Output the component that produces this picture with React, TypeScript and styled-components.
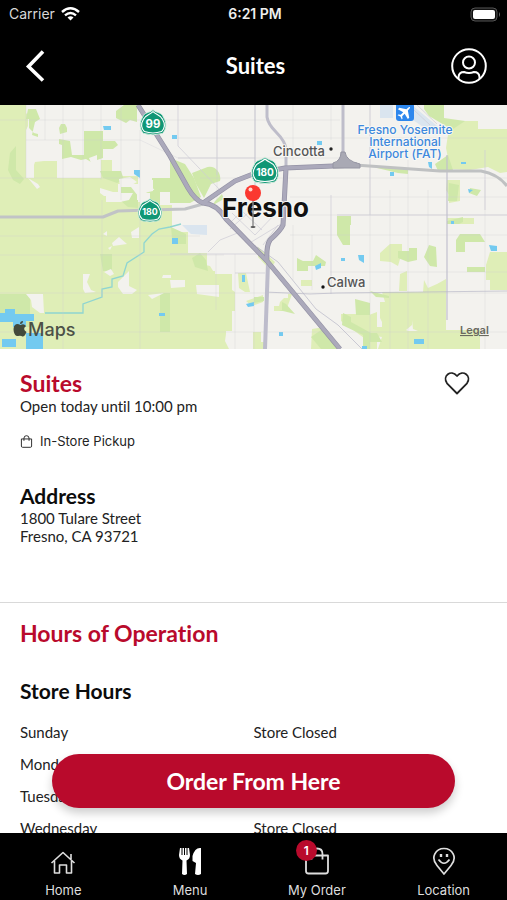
import React from "react";
import styled, { createGlobalStyle } from "styled-components";

const brand = "#b90a2c";

const GlobalStyle = createGlobalStyle`
  * { box-sizing: border-box; }
  body { margin: 0; background: #fff; font-family: Lato, "Open Sans", sans-serif; font-variant-ligatures: none; color: #222; }
  h1, h2, h3, p, address { margin: 0; font-style: normal; }
  button { font: inherit; color: inherit; border: 0; padding: 0; background: none; cursor: pointer; }
  svg { display: block; }
`;

const Screen = styled.div`
  display: flex;
  flex-direction: column;
  height: 100vh;
`;

const StatusBar = styled.div`
  display: grid;
  grid-template-columns: 1fr auto 1fr;
  align-items: center;
  height: 28px;
  padding: 0 6px 0 9px;
  background: #000;
  color: #d8d8d8;
  font: 400 14px/20px Inter, sans-serif;
`;

const Carrier = styled.div`
  display: flex;
  align-items: center;
  gap: 6px;
`;

const Clock = styled.time`
  font-weight: 600;
  color: #eee;
`;

const Battery = styled.svg`
  justify-self: end;
`;

const Header = styled.header`
  display: grid;
  grid-template-columns: 1fr auto 1fr;
  align-items: center;
  flex: none;
  height: 77px;
  padding: 0 20px 2px 24px;
  background: #000;
  color: #fff;
`;

const PageTitle = styled.h1`
  font-size: 22px;
  line-height: 28px;
  font-weight: 700;
`;

const IconButton = styled.button<{ $end?: boolean }>`
  justify-self: ${(p) => (p.$end ? "end" : "start")};
`;

const Body = styled.div`
  position: relative;
  flex: 1;
  min-height: 0;
`;

const Scroller = styled.main`
  height: 100%;
  overflow-y: auto;
  scrollbar-width: none;
`;

const Map = styled.svg`
  width: 100%;
  height: auto;
  background: #f3f2ee;
`;

const Section = styled.section<{ $divided?: boolean }>`
  padding: ${(p) => (p.$divided ? "16px 20px 24px" : "20px 20px 57px")};
  border-top: ${(p) => (p.$divided ? "1px solid #d9d9d9" : "0")};
`;

const TitleRow = styled.div`
  display: flex;
  justify-content: space-between;
  align-items: center;
  padding-right: 17px;
`;

const Title = styled.h2`
  font-size: 23px;
  line-height: 28px;
  font-weight: 700;
  color: ${brand};
`;

const Subtitle = styled.h3`
  font-size: 21px;
  line-height: 26px;
  font-weight: 700;
  color: #0c0c0c;
`;

const Text = styled.p`
  font-size: 15px;
  line-height: 18px;
`;

const Service = styled.p`
  display: flex;
  align-items: center;
  gap: 7px;
  margin: 17px 0 33px;
  font: 400 13px/18px Inter, sans-serif;
`;

const HoursTable = styled.table`
  width: 100%;
  border-collapse: collapse;
  table-layout: fixed;
  font-size: 15px;
  line-height: 20px;

  caption {
    padding: 31px 0 12px;
    text-align: left;
  }
  th, td {
    width: 50%;
    padding: 6px 0;
    text-align: left;
    font-weight: 400;
  }
`;

const OrderButton = styled.button`
  && {
    position: absolute;
    left: 52px;
    right: 52px;
    bottom: 25px;
    height: 54px;
    border-radius: 27px;
    background: ${brand};
    color: #fff;
    font-size: 23px;
    font-weight: 700;
    box-shadow: 0 5px 10px rgba(0, 0, 0, 0.2);
  }
`;

const TabBar = styled.nav`
  display: grid;
  grid-template-columns: repeat(4, 1fr);
  flex: none;
  height: 67px;
  background: #000;
`;

const Tab = styled.a`
  display: flex;
  flex-direction: column;
  align-items: center;
  gap: 6px;
  padding-top: 14px;
  color: #dedede;
  text-decoration: none;
  font: 400 13px/18px Inter, sans-serif;
`;

const TabIcon = styled.span`
  position: relative;
`;

const Badge = styled.span`
  position: absolute;
  top: -7px;
  left: -7px;
  width: 21px;
  height: 21px;
  border-radius: 50%;
  background: ${brand};
  color: #fff;
  text-align: center;
  font-size: 12px;
  line-height: 21px;
  font-weight: 600;
`;

const Shield = ({ x, y, n, s = 1 }: { x: number; y: number; n: string; s?: number }) => (
  <g transform={`translate(${x} ${y}) scale(${s})`}>
    <path d="M0-14C4-10 9-12 11-6C15 0 14 7 10 11Q0 14-10 11C-14 7-15 0-11-6C-9-12-4-10 0-14Z" fill="#109775" stroke="#d8efe2" strokeWidth="1" />
    <path d="M0-12C4-8 8-9 10-4C13 1 12 6 9 9Q0 12-9 9C-12 6-13 1-10-4C-8-9-4-8 0-12Z" fill="none" stroke="#fff" strokeWidth="1.2" />
    <text y="5" textAnchor="middle" fontFamily="Inter, sans-serif" fontSize={n.length > 2 ? 10 : 12} fontWeight="700" fill="#fff">{n}</text>
  </g>
);

const StoreMap = () => (
  <Map viewBox="0 105 507 244" role="img" aria-label="Map of Fresno">
    <rect y="105" width="507" height="244" fill="#f3f2ee" />
    <g fill="#dfeeb7">
      <path d="M0 105H26V178H34V161H45L57 159V178H83V105H83V178H101V160H112V176H138V184H118V192H106V202H140V205H172V232H188V253H207V271H215V274H232V290L235 292V311H232V331H226V337L232 344V349H0Z" />
      <path d="M0 105H25V112L28 115V126L25 132V178H0Z" />
      <path d="M382 292H446V330H480V349H378L382 337L368 335V327H382V322L380 318V302H385Z" />
      <path d="M450 121H478V129H507V172L500 173L488 167L470 170L448 169V158L446 148ZM447 180H460V201L449 203V195L446 190ZM490 252H507V290H490V280H486V265ZM380 253L390 244H402V252L398 266L391 262L380 261ZM400 274L407 271V291H399ZM424 280L428 288L437 284L446 279V292H423ZM447 218H474V224H448Z" />
      <path d="M356 308L369 305V315L377 312V349H366L364 338L341 321V314H356ZM170 240L178 243L184 260L210 266L215 274H170ZM301 280H312V286H301ZM246 301L263 295V302L252 306ZM312 329L324 327L337 349H311Z" />
      <path d="M238 273H246L250 292H245L239 288ZM280 302L284 298H288V294H292L286 311H274V306H279ZM258 247L275 262L270 270L258 257ZM253 332H261V342H265V349H253Z" />
    </g>
    <path fill="#f3f2ee" d="M45 105H83V140H45Z" />
    <g fill="#cfe8a9">
      <path d="M28 109H36L40 119L35 122L32 135L38 137V134L34 133L29 128V119H26ZM61 124H65L67 128V132L60 134L59 128ZM116 111L124 105H137V122L130 120L126 123L116 118ZM84 131H103V158L91 162L86 159L81 160L71 157L62 159V145L59 144V139L70 141L72 155H84ZM103 141H115L118 145L113 149H103ZM100 171H121L124 180L117 183L103 178ZM152 178H170V192H156L152 187ZM121 187H131L138 196V208L128 207L121 201ZM145 190H160V206L152 202ZM170 158L185 164L194 178L201 197L190 203H170ZM10 153L16 146V170L24 179L20 184L13 180L8 170ZM100 254H112V271H103Z" />
      <path d="M205 168C215 163 222 174 220 181L211 184L204 198L196 184L192 173ZM215 201L222 194L224 199L213 205ZM0 294H30V327H22V314H0ZM160 293H170V332H160ZM171 227L186 234V244H175L172 238ZM200 253L206 260L208 271L195 267L192 258ZM337 225H350V245H343L337 235ZM456 240L460 234H480L485 242H465V252H456ZM429 245L436 247L437 267L430 266L424 257ZM409 248H417V260L408 262L398 258V251H409ZM467 267H485V272H467ZM370 291L389 296V298L376 297ZM355 299L370 303V315H356ZM343 313L351 317V322L371 333H377L382 342H370V349H363V335L342 325ZM450 131L446 126L429 116L424 109V105H444V118L465 121ZM448 155L453 170L438 171L435 164ZM377 168H408V174L398 173ZM449 183L459 185L457 201H448ZM470 188L481 190L477 196L469 193ZM337 216H351V225H337ZM447 221L463 217V222L459 224H447ZM316 255L326 262L325 266H308V271H297V258L303 261H313ZM295 314L286 304L282 302V310H279ZM311 337L324 328L337 349H321ZM254 297H264V301L254 303Z" />
    </g>
    <g fill="#f3f2ee">
      <path d="M26 141H57V161H44L35 162L32 171L26 178ZM89 158L97 155V163H91ZM119 179L130 177L137 182L130 186H120ZM120 193H133L129 200L120 202ZM144 180H153V191L144 193ZM28 178L38 184L40 187L37 189ZM100 188L113 192L117 196H104L100 193ZM137 193H150V200H137ZM83 274H90L87 282L91 290L96 292L85 293L83 289ZM26 294H43L44 313H40L32 307L31 300ZM118 282L129 271V286L137 290L132 294H123L118 287ZM112 243L119 237L127 244L113 246ZM104 272L111 269L114 274L110 276ZM131 232L139 227V238H132ZM148 295L164 293L152 299ZM163 275H171V278H162ZM108 248L112 246L110 250ZM103 234L107 231V236ZM196 285H219V297L197 294ZM170 280H185V287L171 288ZM226 334H237V349H229L225 341Z" />
      <path d="M406 330L412 325V320L413 329L418 331H408Z" />
    </g>
    <path fill="#dae5ef" d="M182 225H207V235L191 234ZM380 105H393V118H380ZM412 105L442 130L435 135L410 118Z" />
    <g fill="#73caf0">
      <path d="M103 126H111V130H104ZM134 170H140V178L134 174ZM0 313H5V309H15V322H0ZM13 314H34V321H26V327H13ZM2 339H16V347H2ZM26 333H43V349H26ZM159 313H165V316H159ZM172 238H178V244H172ZM242 275H245V282H242ZM246 304L254 302V306L248 307ZM279 332H283V336H279ZM315 266L321 263V268L316 270ZM172 135H177V139H172ZM317 141H322V145H317ZM341 258H345V261H341ZM358 255H364V263L359 260ZM489 245L497 246V251H491ZM414 339H424V344H414ZM390 172H394V176H390ZM461 162H466V164H461ZM468 189L473 190L469 193ZM428 162H432V169L429 167ZM362 346H367V349H362ZM451 221H454V224H451Z" />
    </g>
    <path fill="none" stroke="#8fd5d1" strokeWidth="1.3" d="M45 313H83V304L102 297V289L112 287V279L123 276L127 263L144 252V243L152 234L159 229L170 227L181 224" />
    <g fill="none" stroke="#cdccd6" strokeWidth="0.7">
      <path opacity="0.45" d="M26 105V178M0 120H178M26 140H140L178 158M0 178H140M63 105V349M83 105V215M121 105V200M140 130V349M0 236H200M0 255H224M0 293H507M0 332H507M102 200V298M217 130V200M255 105V170M293 105V160M331 105V140M370 105V349M390 190V349M408 160V349M428 190V349M485 180V349M178 138H507M178 120H340M178 158H340M200 178H507M290 197H507M290 215H507M290 235H507M330 272H507M216 254V310M235 254V349M254 273V349M293 225V280M312 235V290M45 105V140M101 105V180" />
      <path d="M178 105V146L220 190M178 158H255M217 105V175M370 105V215M447 155V320M485 150V210M337 215H507M208 252L220 240L240 232M170 254H260M235 273H265M331 195V294" />
      <path stroke="#b8b7c7" d="M447 155V320M265 292L310 294L337 293L507 291M257 247L278 262L316 309L338 325L362 349M255 105V185" />
      <path d="M263 245L278 225M248 244L281 224M228 225L242 211L262 230M232 213L255 235L278 211M230 229L248 213M417 105L437 124M414 110L430 125" />
    </g>
    <g fill="none" strokeLinejoin="round">
      <path stroke="#c1c3c6" strokeWidth="3" d="M0 217H103L118 211L150 210L185 209L203 204" />
      <path stroke="#bfc1c2" strokeWidth="3" d="M355 165L440 171H481Q498 174 507 186" />
      <path stroke="#bebdca" strokeWidth="3" d="M267 105V117Q268 124 276 132Q286 142 286 150V166M343 105V158" />
      <path stroke="#bdbccb" strokeWidth="4" d="M268 263L265 349" />
      <path stroke="#9492a5" strokeWidth="5" d="M138 105L170 156L188 188Q195 200 203 203Q217 204 226 219L267 261L340 349M203 203L235 181L253 174L285 168L357 165M286 168L283 225Q281 230 270 240Q266 246 267 262" />
      <path stroke="#aba9bb" strokeWidth="3.6" d="M138 105L170 156L188 188Q195 200 203 203Q217 204 226 219L267 261L340 349M203 203L235 181L253 174L285 168L357 165M286 168L283 225Q281 230 270 240Q266 246 267 262" />
      <path fill="#a9a9b4" stroke="#9494a2" strokeWidth="1" d="M341 152H345Q346 161 360 164V168L333 168V163Q341 161 341 152Z" />
    </g>
    <Shield x={153} y={123} n="99" s={0.95} />
    <Shield x={265} y={171} n="180" />
    <Shield x={150} y={211} n="180" s={0.88} />
    <rect x="396" y="103" width="18" height="18" rx="3" fill="#2d87ed" />
    <path transform="translate(405 112) rotate(45)" fill="#fff" d="M0-7Q1-7 1-3L7 1V3L1 1.500V5L3 6.500V7.500L0 6.500L-3 7.500V6.500L-1 5V1.500L-7 3V1L-1-3Q-1-7 0-7Z" />
    <g fontFamily="Inter, sans-serif" stroke="#f8f8f5" strokeWidth="2" paintOrder="stroke" strokeLinejoin="round">
      <g fontSize="12" fontWeight="500" fill="#3d88dd" textAnchor="middle">
        <text x="405" y="134">Fresno Yosemite</text>
        <text x="405" y="146">International</text>
        <text x="405" y="158">Airport (FAT)</text>
      </g>
      <g fontSize="13" fontWeight="500" fill="#555">
        <text x="273" y="156">Cincotta</text>
        <text x="327" y="287">Calwa</text>
      </g>
      <text x="222" y="217" fontSize="26" fontWeight="700" fill="#111">Fresno</text>
      <text x="28" y="336" fontSize="18" fontWeight="500" fill="#4c5147" stroke="none">Maps</text>
      <text x="460" y="334" fontSize="11" fontWeight="600" fill="#69695f" textDecoration="underline" stroke="none">Legal</text>
    </g>
    <circle cx="331" cy="149" r="1.7" fill="#222" />
    <circle cx="323" cy="287" r="1.7" fill="#111" />
    <path fill="#424a3b" d="M20.500 325Q24 323 26 326Q22 329 26.500 332Q24 338 21.500 336Q20 335.500 18 336C14 337 12 328 15 325Q17 323 20.500 325ZM20 324Q20 321 23 321Q23 324 20 324Z" />
    <path d="M253 200V226" stroke="#888" strokeWidth="1.4" />
    <ellipse cx="253" cy="227" rx="2.5" ry="1" fill="#555" />
    <circle cx="253" cy="193" r="8" fill="#fb3830" />
    <circle cx="250.5" cy="189.5" r="2" fill="#ffd6ce" />
  </Map>
);

const BagIcon = ({ size, stroke }: { size: number; stroke: number }) => (
  <svg width={size} height={size} viewBox="0 0 28 28" fill="none" stroke="currentColor" strokeWidth={stroke}>
    <path d="M3 8.500H25V24Q25 26.500 22.500 26.500H5.500Q3 26.500 3 24Z" strokeLinejoin="round" />
    <path d="M8.500 12.500V7Q8.500 1.500 14 1.500Q19.500 1.500 19.500 7V12.500" />
  </svg>
);

const hours = [
  ["Sunday", "Store Closed"],
  ["Monday", "Store Closed"],
  ["Tuesday", "Store Closed"],
  ["Wednesday", "Store Closed"],
];

export default function App() {
  return (
    <Screen>
      <GlobalStyle />
      <StatusBar>
        <Carrier>
          Carrier
          <svg width="19" height="14" viewBox="0 0 19 14" fill="none" stroke="#fff" strokeWidth="2.4">
            <path d="M1 5Q9.500-2.500 18 5M4 8.300Q9.500 3.500 15 8.300" />
            <path d="M9.500 13.500L6.500 10.500Q9.500 8 12.500 10.500Z" fill="#fff" stroke="none" />
          </svg>
        </Carrier>
        <Clock>6:21 PM</Clock>
        <Battery width="31" height="15" viewBox="0 0 31 15">
          <rect x="1" y="1" width="26" height="13" rx="4" fill="#111" stroke="#555" />
          <rect x="3" y="3" width="22" height="9" rx="2" fill="#fff" />
          <path d="M29 5Q31 7.500 29 10Z" fill="#666" />
        </Battery>
      </StatusBar>
      <Header>
        <IconButton aria-label="Back">
          <svg width="22" height="34" viewBox="0 0 22 34" fill="none" stroke="#fff" strokeWidth="3.6">
            <path d="M19 2.500L4.500 17.500L19 31.500" />
          </svg>
        </IconButton>
        <PageTitle>Suites</PageTitle>
        <IconButton $end aria-label="Account">
          <svg width="36" height="36" viewBox="0 0 36 36" fill="none" stroke="#fff" strokeWidth="2">
            <circle cx="18" cy="18" r="16.800" />
            <circle cx="18" cy="14.500" r="6" />
            <path d="M7.500 31V29Q8 24 13 24Q18 26 23 24Q28 24 28.500 29V31" />
          </svg>
        </IconButton>
      </Header>
      <Body>
        <Scroller>
          <StoreMap />
          <Section>
            <TitleRow>
              <Title>Suites</Title>
              <IconButton aria-label="Add to favorites">
                <svg width="26" height="24" viewBox="0 0 26 24" fill="none" stroke="#222" strokeWidth="1.8" strokeLinejoin="round">
                  <path d="M13 22.500L3 12.300C-2 5 7-2 13 5C19-2 28 5 23 12.300Z" />
                </svg>
              </IconButton>
            </TitleRow>
            <Text>Open today until 10:00 pm</Text>
            <Service>
              <BagIcon size={13} stroke={2} />
              In-Store Pickup
            </Service>
            <Subtitle>Address</Subtitle>
            <address>
              <Text>1800 Tulare Street</Text>
              <Text>Fresno, CA 93721</Text>
            </address>
          </Section>
          <Section $divided>
            <Title>Hours of Operation</Title>
            <HoursTable>
              <caption><Subtitle>Store Hours</Subtitle></caption>
              <tbody>
                {hours.map(([day, time]) => (
                  <tr key={day}>
                    <th scope="row">{day}</th>
                    <td>{time}</td>
                  </tr>
                ))}
              </tbody>
            </HoursTable>
          </Section>
        </Scroller>
        <OrderButton>Order From Here</OrderButton>
      </Body>
      <TabBar>
        <Tab href="#home">
          <TabIcon>
            <svg width="28" height="28" viewBox="0 0 28 28" fill="none" stroke="currentColor" strokeWidth="1.6">
              <path d="M2.500 16L14 5.500L25.500 16M5.500 14V26H10.500V18H17.500V26H22.500V14M22 12V7" strokeLinejoin="round" />
            </svg>
          </TabIcon>
          Home
        </Tab>
        <Tab href="#menu">
          <TabIcon>
            <svg width="28" height="28" viewBox="0 0 28 28" fill="#fff">
              <path d="M4 1L3 8Q3 12 6.500 13.500L6 27Q8.500 29 11 27L10.500 13.500Q14 12 14 8L13 1L11.500 1V8H10.500V1H9V8H8V1H6.500V8H5.500V1ZM25 1Q19 0 16.500 9V14L20 16L19 27Q22 29 25 27Z" />
            </svg>
          </TabIcon>
          Menu
        </Tab>
        <Tab href="#order">
          <TabIcon>
            <BagIcon size={28} stroke={1.8} />
            <Badge>1</Badge>
          </TabIcon>
          My Order
        </Tab>
        <Tab href="#location">
          <TabIcon>
            <svg width="28" height="28" viewBox="0 0 28 28" fill="none" stroke="currentColor" strokeWidth="1.7">
              <path d="M14 27L7 18.500C0 10 6 1.500 14 1.500S28 10 21 18.500Z" strokeLinejoin="round" />
              <path d="M8.500 12.500Q14 20 19.500 12.500" />
              <path d="M11 7V10M17 7V10" strokeWidth="2.4" />
            </svg>
          </TabIcon>
          Location
        </Tab>
      </TabBar>
    </Screen>
  );
}
